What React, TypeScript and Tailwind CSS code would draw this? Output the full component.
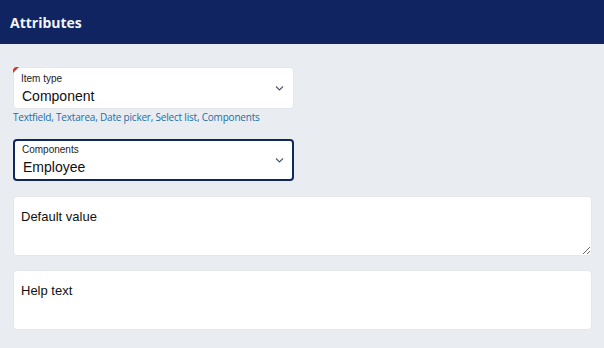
import React from 'react';

const Chevron: React.FC = () => (
  <svg width="9" height="6" viewBox="0 0 9 6" className="text-gray-600">
    <path d="M1 1.5l3.5 3.5 3.5-3.5" fill="none" stroke="currentColor" strokeWidth="1.1" />
  </svg>
);

const SelectBox: React.FC<{ label: string; value: string; focused?: boolean; required?: boolean }> = ({ label, value, focused, required }) => (
  <div
    className={`relative w-[281px] h-[42px] bg-white rounded-[4px] flex items-center justify-between pl-[7px] ${
      focused ? 'border-2 border-[#10275e] pr-[8px]' : 'border border-[#e3e7ec] pr-[9px]'
    }`}
  >
    {required && (
      <div className="absolute -left-px -top-px w-0 h-0 border-t-[6px] border-t-[#c8372d] border-r-[6px] border-r-transparent rounded-tl-[4px]" />
    )}
    <div className={`flex flex-col leading-none ${focused ? '-mt-[3px]' : ''}`}>
      <span className="text-[10px] text-[#222] font-['Liberation_Sans',sans-serif] mt-[1px]">{label}</span>
      <span className="text-[14px] text-[#111] font-['Liberation_Sans',sans-serif] mt-[5px] ml-[1px]">{value}</span>
    </div>
    <Chevron />
  </div>
);

const App: React.FC = () => {
  return (
    <div className="w-[604px] h-[348px] bg-[#e9ecf0] overflow-hidden">
      <div className="h-[44px] bg-[#0f2461] flex items-center px-[10px]">
        <h1 className="text-[14px] font-bold text-[#f2f4fa] font-['Open_Sans',sans-serif]">Attributes</h1>
      </div>

      <div className="pl-[13px] pr-[12px] pt-[23px] flex flex-col">
        <SelectBox label="Item type" value="Component" required />
        <p className="text-[10px] text-[#1c6fa8] font-['Open_Sans',sans-serif] mt-[1px] leading-[14px] tracking-[-0.2px]">
          Textfield, Textarea, Date picker, Select list, Components
        </p>

        <div className="mt-[15px]">
          <SelectBox label="Components" value="Employee" focused />
        </div>

        <textarea
          placeholder="Default value"
          className="mt-[15px] w-full h-[60px] bg-white rounded-[4px] border border-[#e3e7ec] px-[7px] pt-[10px] text-[13px] font-['Liberation_Sans',sans-serif] placeholder:text-[#111] outline-none resize-y"
        />

        <textarea
          placeholder="Help text"
          className="mt-[14px] w-full h-[60px] bg-white rounded-[4px] border border-[#e3e7ec] px-[7px] pt-[10px] text-[13px] font-['Liberation_Sans',sans-serif] placeholder:text-[#111] outline-none resize-none"
        />
      </div>
    </div>
  );
};

export default App;
